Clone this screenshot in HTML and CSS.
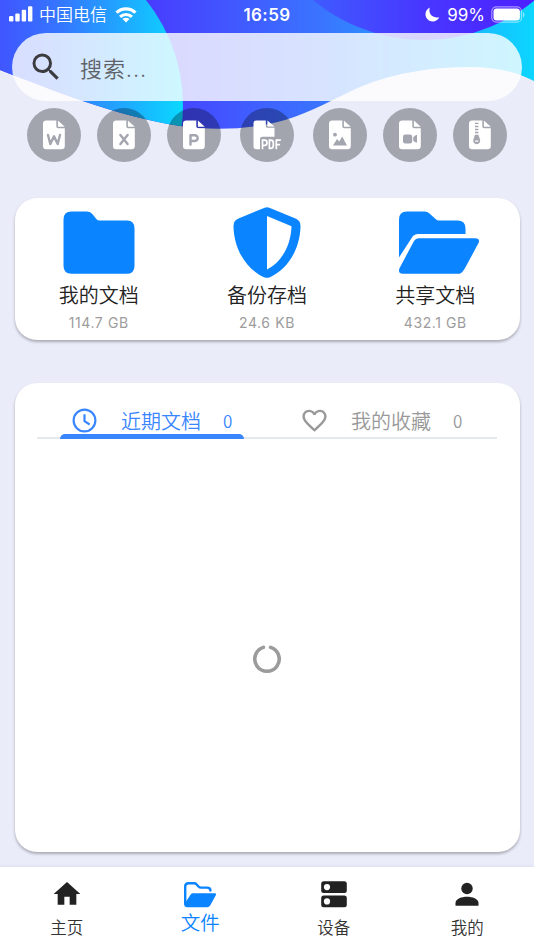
FILE: index.html
```html
<!DOCTYPE html>
<html lang="zh-CN">
<head>
<meta charset="utf-8">
<meta name="viewport" content="width=device-width, initial-scale=1">
<title>文件</title>
<link rel="stylesheet" href="styles.css">
</head>
<body>
<svg class="backdrop" width="534" height="140" viewBox="0 0 534 140" aria-hidden="true">
  <defs>
    <linearGradient id="g-right" gradientUnits="userSpaceOnUse" x1="146" y1="0" x2="534" y2="0"><stop offset="0" stop-color="#483cff"/><stop offset=".45" stop-color="#3a74ff"/><stop offset="1" stop-color="#0cd6ff"/></linearGradient>
    <linearGradient id="g-left" gradientUnits="userSpaceOnUse" x1="-40" y1="0" x2="183" y2="0"><stop offset="0" stop-color="#4740ff"/><stop offset=".45" stop-color="#3576ff"/><stop offset="1" stop-color="#0ad8ff"/></linearGradient>
    <linearGradient id="g-top" gradientUnits="userSpaceOnUse" x1="310" y1="0" x2="534" y2="0"><stop offset="0" stop-color="#3f5cff"/><stop offset=".5" stop-color="#4837ff"/><stop offset="1" stop-color="#4d20ff"/></linearGradient>
    <clipPath id="wave"><path d="M0 0H534V81C514 71 494 67 470 67C435 67 396 72 360 87C335 98 312 112 285 120C255 129 215 131 180 126C115 116 50 89 0 70Z"/></clipPath>
  </defs>
  <g clip-path="url(#wave)">
    <rect width="534" height="140" fill="url(#g-right)"/>
    <circle cx="16" cy="105" r="167" fill="url(#g-left)"/>
    <circle cx="424" cy="-134" r="174" fill="url(#g-top)"/>
  </g>
</svg>

<div class="app">
  <header class="status">
    <div class="status-left">
      <svg width="24" height="16" viewBox="0 0 24 16" fill="#fff"><rect x="0" y="10" width="4.4" height="5.4" rx="1.2"/><rect x="6.3" y="7.4" width="4.4" height="8" rx="1.2"/><rect x="12.7" y="3.8" width="4.4" height="11.6" rx="1.2"/><rect x="19" y="0.3" width="4.4" height="15.1" rx="1.2"/></svg>
      <span class="carrier">中国电信</span>
      <svg class="wifi" width="22" height="16" viewBox="0 0 22 16" fill="none" stroke="#fff" stroke-width="3.200"><path d="M1.500 5.700a13.600 13.600 0 0 1 19 0"/><path d="M5.100 9.900a8.400 8.400 0 0 1 11.800 0"/><path d="M11 15.600l-3.500-3.500a5 5 0 0 1 7 0z" fill="#fff" stroke="none"/></svg>
    </div>
    <span class="clock">16:59</span>
    <div class="status-right">
      <svg width="15" height="15" viewBox="0 0 15 15" fill="#fff"><path d="M4.800.6C2.200 1.800.5 4.300.5 7.200c0 4 3.200 7.200 7.200 7.200 2.900 0 5.400-1.700 6.600-4.200-.8.300-1.600.4-2.400.3C7.700 10.500 4.500 7.500 4.400 3.600c0-1 .1-2.100.4-3z"/></svg>
      <span class="percent">99%</span>
      <svg width="34" height="18" viewBox="0 0 34 18"><rect x=".8" y=".8" width="29.700" height="15.400" rx="4.500" fill="none" stroke="#fff" stroke-opacity=".5" stroke-width="1.200"/><rect x="2.500" y="2.600" width="26.400" height="11.800" rx="3" fill="#fff"/><path d="M32 6v5.500q1.500-.8 1.500-2.750T32 6z" fill="#fff" fill-opacity=".5"/></svg>
    </div>
  </header>

  <label class="search">
    <svg width="36" height="36" viewBox="0 0 24 24" fill="#3c3c40"><path d="M15.500 14h-.79l-.28-.27A6.471 6.471 0 0 0 16 9.500 6.500 6.500 0 1 0 9.500 16c1.610 0 3.090-.59 4.230-1.570l.27.28v.79l5 4.990L20.490 19l-4.990-5zm-6 0C7.010 14 5 11.990 5 9.500S7.010 5 9.500 5 14 7.010 14 9.500 11.990 14 9.500 14z"/></svg>
    <span>搜索...</span>
  </label>

  <nav class="types">
    <div class="type"><svg viewBox="0 0 22 30"><use href="#doc"/><path class="cut" d="M5 15l2.300 9L11 16.300 14.700 24 17 15"/></svg></div>
    <div class="type"><svg viewBox="0 0 22 30"><use href="#doc"/><path class="cut" d="M7.400 15l7.200 9M14.600 15l-7.200 9"/></svg></div>
    <div class="type"><svg viewBox="0 0 22 30"><use href="#doc"/><path class="cut" d="M7.500 24.500v-9.300h4.300a2.900 2.900 0 0 1 0 5.800H7.500"/></svg></div>
    <div class="type type-pdf"><svg class="pdf" viewBox="0 0 30 30"><path fill="#fff" d="M3.500.5h9.300v5.800q0 1.500 1.500 1.500H21.500v9H9.500q-2.500 0-2.500 2.500v9.900H3.500q-3 0-3-3V3.500q0-3 3-3zM14.400.5l7.100 6h-7.100z"/><path fill="none" stroke="#fff" stroke-width="1.700" d="M9.500 29.300v-9.200h2.300q2.200 0 2.200 2.600t-2.200 2.600H9.500M16.400 20.100v8.300h1.300q2.600 0 2.600-2.600v-3.100q0-2.600-2.600-2.600zM23.300 29.300v-9.200h4.500M23.300 24.600h3.800"/></svg></div>
    <div class="type"><svg viewBox="0 0 22 30"><use href="#doc"/><circle cx="6" cy="14.700" r="1.900" fill="#a3a5af"/><path fill="#a3a5af" d="M4 25.500l4-6.500 2.300 2.500 2.900-5.100 4.800 9.100z"/></svg></div>
    <div class="type"><svg viewBox="0 0 22 30"><use href="#doc"/><rect x="4" y="14.500" width="9.200" height="9" rx="2.300" fill="#a3a5af"/><path fill="#a3a5af" d="M14.200 17.400q1.300-2 3.800-2.600v8q-2.500-.4-3.800-2.400z"/></svg></div>
    <div class="type"><svg viewBox="0 0 22 30"><use href="#doc"/><path fill="none" stroke="#a3a5af" stroke-width="1.300" d="M6 3.300h3.400M6 6.500h3.400M6 9.500h3.400M6 12.500h3.400"/><path fill="#a3a5af" d="M6 14.800h3.400l1.600 4.800a3.500 3.500 0 1 1-6.600 0z"/><path stroke="#fff" stroke-width="1.200" d="M6 21.100h3.400"/></svg></div>
  </nav>

  <section class="card storage">
    <div class="store">
      <svg width="82" height="72" viewBox="0 0 82 72" fill="#0b84ff"><path d="M13.500 4.500H29q3.500 0 5.800 2.900l3.300 4.300q1.400 1.900 3.700 1.900h27.200q7.500 0 7.500 8v37.300q0 7.900-8 7.900h-55q-8 0-8-8V12.500q0-8 8-8z"/></svg>
      <strong>我的文档</strong><small>114.7 GB</small>
    </div>
    <div class="store">
      <svg width="82" height="72" viewBox="0 0 82 72"><path fill="#0b84ff" d="M38.700.7Q41-.2 43.300.7L69.500 11.500Q74.800 13.600 74.500 19.500C74 42 62 62 44 70.200q-3 1.300-6 0C20 62 8 42 7.500 19.500Q7.200 13.600 12.500 11.500z"/><path fill="#fff" d="M41 9l24.500 10.300C65 37 56.500 54.700 41 62.500z"/></svg>
      <strong>备份存档</strong><small>24.6 KB</small>
    </div>
    <div class="store">
      <svg class="shared" width="82" height="72" viewBox="0 0 82 72" fill="#0b84ff"><path d="M1 50.500V12.500q0-8 8-8h17.500q3 0 5 2l6 5.500q1.600 1.500 3.800 1.500h18.200q8 0 8 8v5.500H20q-4 0-6.200 3.700zM20.500 31.300H77q5.500 0 3.500 4.800L66.800 61.500q-3.300 5.200-5.300 5.200H5q-5.500 0-3.500-5.500L16 34q1.700-2.700 4.500-2.700z"/></svg>
      <strong>共享文档</strong><small>432.1 GB</small>
    </div>
  </section>

  <section class="card recent">
    <div class="tabs">
      <div class="tab active">
        <svg width="29" height="29" viewBox="0 0 24 24" fill="none" stroke="currentColor" stroke-width="1.800"><circle cx="12" cy="12" r="9"/><path d="M12 6.800V12.600l4.300 2.700"/></svg>
        <span class="tab-name">近期文档</span><span class="count">0</span>
      </div>
      <div class="tab">
        <svg width="29" height="29" viewBox="0 0 24 24" fill="currentColor"><path d="M16.500 3c-1.740 0-3.410.81-4.500 2.090C10.910 3.810 9.240 3 7.500 3 4.420 3 2 5.420 2 8.500c0 3.780 3.400 6.860 8.550 11.540L12 21.350l1.450-1.320C18.600 15.360 22 12.280 22 8.500 22 5.420 19.580 3 16.500 3zm-4.400 15.550l-.1.100-.1-.1C7.140 14.240 4 11.390 4 8.500 4 6.500 5.500 5 7.500 5c1.540 0 3.040.99 3.570 2.360h1.870C13.460 5.990 14.960 5 16.500 5c2 0 3.500 1.500 3.500 3.500 0 2.890-3.140 5.740-7.900 10.050z"/></svg>
        <span class="tab-name">我的收藏</span><span class="count">0</span>
      </div>
    </div>
    <div class="loading">
      <svg width="32" height="32" viewBox="0 0 32 32" fill="none" stroke="#9b9b9b" stroke-width="3.600" stroke-linecap="round"><path d="M19.600 4.400a12.200 12.200 0 1 1-7.200 0"/></svg>
    </div>
  </section>

  <nav class="bottom">
    <a class="item"><svg width="32" height="32" viewBox="0 0 24 24" fill="#222"><path d="M10 20v-6h4v6h5v-8h3L12 3 2 12h3v8z"/></svg><span>主页</span></a>
    <a class="item current"><svg width="34" height="28" viewBox="0 0 34 28"><path fill="none" stroke="#0b84ff" stroke-width="2.400" stroke-linejoin="round" stroke-linecap="round" d="M2.200 23V5.500Q2.200 2.200 5.500 2.200h5.700q1.300 0 2.200 1l2.300 2.500q.9.900 2.200.9h6.200q3.300 0 3.300 3"/><path fill="#0b84ff" d="M10 12.200h21.500q2.300 0 1.300 2L27.300 24.300q-1.100 2-3.100 2H4.400q-3.400 0-3-3.200L7.700 13.500q.8-1.300 2.300-1.300z"/></svg><span>文件</span></a>
    <a class="item"><svg width="32" height="32" viewBox="0 0 32 32"><rect x="3.200" y="3.300" width="25.600" height="11.600" rx="2.500" fill="#222"/><rect x="3.200" y="17.600" width="25.600" height="11.600" rx="2.500" fill="#222"/><circle cx="9" cy="9.100" r="3.100" fill="#fff"/><circle cx="9" cy="23.400" r="3.100" fill="#fff"/></svg><span>设备</span></a>
    <a class="item"><svg width="32" height="32" viewBox="0 0 32 32" fill="#222"><circle cx="16" cy="10.500" r="5.700"/><path d="M4.500 27.700v-2.800c0-4.200 6.200-6.200 11.500-6.200s11.500 2 11.500 6.200v2.800z"/></svg><span>我的</span></a>
  </nav>
</div>

<svg class="symbols" aria-hidden="true"><symbol id="doc" viewBox="0 0 22 30"><path fill="#fff" d="M3.300.5h10v5.800q0 1.900 1.900 1.900h6.600v17.700q0 3.300-3.300 3.300H3.300q-3.300 0-3.300-3.300V3.800Q0 .5 3.300.5zM14.900.5l6.900 6.200h-6.900z"/></symbol></svg>
</body>
</html>
```
FILE: styles.css
```css
* { box-sizing: border-box; }

body {
  margin: 0;
  background: #eaecf9;
  font-family: Inter, "Noto Sans CJK SC", sans-serif;
  font-weight: 350;
}

svg { display: block; flex: none; }

.backdrop { position: absolute; top: 0; left: 0; }
.symbols { position: absolute; width: 0; height: 0; }

.app {
  position: relative;
  display: flex;
  flex-direction: column;
  height: 950px;
  overflow: hidden;
}

.status {
  display: grid;
  grid-template-columns: 1fr auto 1fr;
  align-items: center;
  height: 33px;
  padding: 0 9px 5px 9px;
  color: #fff;
  font-size: 17px;
}
.status-left, .status-right { display: flex; align-items: center; }
.status-right { justify-content: flex-end; }
.carrier { margin: 1px 8px -1px 6px; line-height: 24px; }
.wifi { margin-top: 1px; }
.clock { margin-top: 1px; font-weight: 600; letter-spacing: .4px; }
.percent { margin: 1px 6px 0 7px; font-weight: 400; letter-spacing: 0; }
.status-right svg { margin-top: 1px; }

.search {
  display: flex;
  align-items: center;
  height: 68px;
  margin: 0 12px;
  padding-left: 16px;
  border-radius: 34px;
  background: rgba(255, 255, 255, .8);
  color: #5f6268;
  font-size: 22px;
  letter-spacing: .9px;
}
.search span { margin-left: 16px; }

.types {
  display: flex;
  justify-content: space-between;
  margin: 7.400px 27px 0;
}
.type {
  display: grid;
  place-items: center;
  width: 54px;
  height: 54px;
  border-radius: 50%;
  background: rgba(0, 0, 0, .3);
}
.type svg { width: 22px; height: 30px; }
.type-pdf { margin: 0 3px; }
.type .pdf { width: 30px; margin-left: 1px; }
.cut { fill: none; stroke: #a3a5af; stroke-width: 2.400; stroke-linecap: round; stroke-linejoin: round; }

.card {
  margin: 0 14.500px;
  border-radius: 22px;
  background: #fff;
  box-shadow: 0 2px 3px rgba(0, 0, 0, .28);
}

.storage {
  display: grid;
  grid-template-columns: repeat(3, 1fr);
  height: 142px;
  margin-top: 35.600px;
  padding-top: 9px;
}
.store { display: flex; flex-direction: column; align-items: center; }
.store strong { margin-top: 2px; color: #222; font-size: 20px; font-weight: 350; line-height: 30px; }
.store small { margin-top: 3px; color: #9c9c9c; font-size: 14px; font-weight: 400; line-height: 18px; letter-spacing: .6px; }
.shared { margin-left: 8px; }

.recent {
  display: flex;
  flex-direction: column;
  height: 469.500px;
  margin-top: 43px;
  padding: 22px 22.500px 0;
}
.tabs {
  display: grid;
  grid-template-columns: 1fr 1fr;
  height: 34px;
  border-bottom: 2px solid #e4e9ee;
}
.tab {
  position: relative;
  display: flex;
  align-items: center;
  height: 34px;
  margin: 0 23px;
  padding: 0 0 2px 10px;
  color: #999;
}
.active { color: #3a86ff; }
.active::after {
  content: "";
  position: absolute;
  inset: auto 0 0;
  height: 5px;
  border-radius: 5px 5px 0 0;
  background: currentColor;
}
.tab-name { margin-left: 22px; font-size: 20px; }
.count { margin-left: 22px; font-size: 17px; font-family: "Noto Sans CJK SC", sans-serif; }

.loading { flex: 1; display: grid; place-items: center; padding-top: 26px; }

.bottom {
  display: grid;
  grid-template-columns: repeat(4, 1fr);
  height: 83px;
  margin-top: 14.500px;
  background: #fff;
  box-shadow: 0 -1px 3px rgba(0, 0, 0, .06);
}
.item {
  display: flex;
  flex-direction: column;
  align-items: center;
  padding-top: 11px;
  color: #333;
  font-size: 16.500px;
  line-height: 24px;
}
.item span { margin-top: 6px; }
.current { padding-top: 14px; color: #0b84ff; font-size: 19.500px; line-height: 28px; }
.current span { margin-top: 0; }
```
